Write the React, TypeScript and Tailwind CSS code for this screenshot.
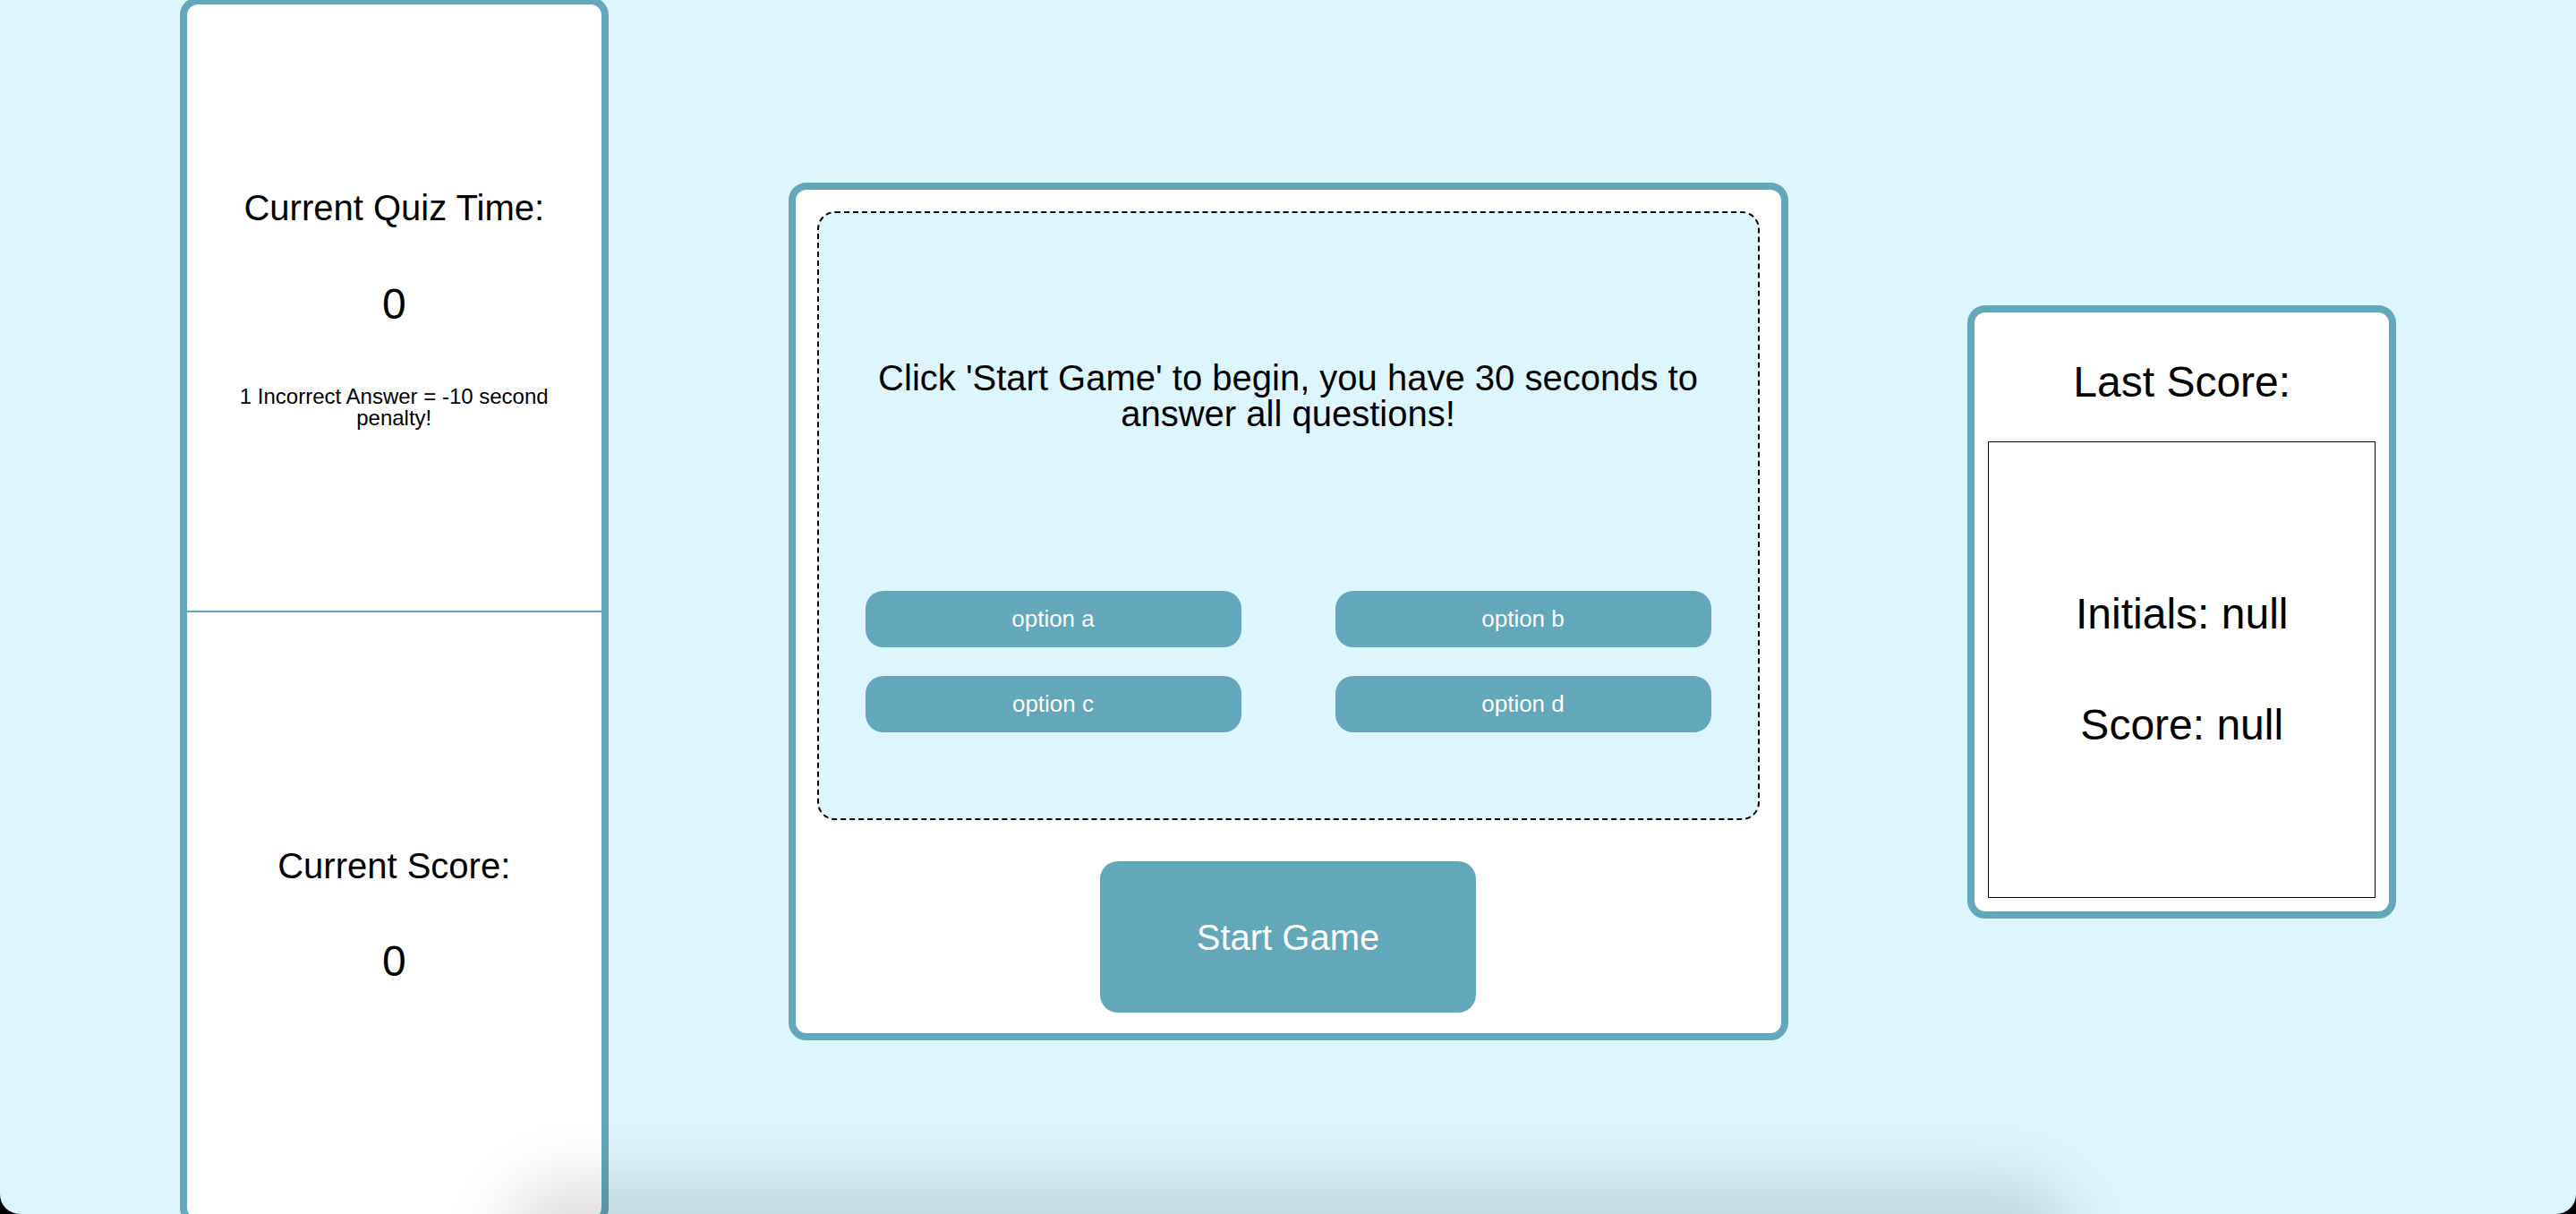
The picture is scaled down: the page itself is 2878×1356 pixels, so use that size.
import React from 'react';

const options = ['option a', 'option b', 'option c', 'option d'];

const App: React.FC = () => {
  return (
    <div className="w-full h-[1356px] bg-black font-['Liberation_Sans',Arial,sans-serif] text-black">
      <div className="relative h-full bg-[#ddf6fe] rounded-b-[22px] overflow-hidden">
        <div className="flex h-[1366px] items-center justify-evenly">
          {/* timer + score column */}
          <div className="flex flex-col w-[479px] h-[1372px] shrink-0 bg-white border-[8px] border-[#62a7ba] rounded-[20px]">
            <div className="flex-1 flex flex-col items-center justify-center text-center">
              <h2 className="text-[40px] leading-[46px]">Current Quiz Time:</h2>
              <p className="mt-[57px] text-[48px] leading-[55px]">0</p>
              <p className="mt-[64px] px-[34px] text-[24px] leading-[24px]">
                1 Incorrect Answer = -10 second penalty!
              </p>
            </div>
            <div className="h-[2px] bg-[#62a7ba]" />
            <div className="flex-1 flex flex-col items-center justify-center text-center">
              <h2 className="text-[40px] leading-[46px]">Current Score:</h2>
              <p className="mt-[56px] text-[48px] leading-[55px]">0</p>
            </div>
          </div>

          {/* quiz card */}
          <div className="flex flex-col w-[1117px] shrink-0 bg-white border-[8px] border-[#62a7ba] rounded-[20px] p-[24px] pb-[23px]">
            <div className="h-[680px] border-2 border-dashed border-black rounded-[20px] bg-[#ddf6fe] flex flex-col items-center pt-[164px]">
              <h2 className="px-[40px] text-center text-[40px] leading-[40px]">
                Click 'Start Game' to begin, you have 30 seconds to answer all questions!
              </h2>
              <div className="mt-[178px] grid grid-cols-2 gap-x-[105px] gap-y-[32px]">
                {options.map(opt => (
                  <button
                    key={opt}
                    className="w-[420px] h-[63px] rounded-[20px] bg-[#62a7ba] text-white text-[26px]"
                  >
                    {opt}
                  </button>
                ))}
              </div>
            </div>
            <button className="mt-[46px] self-center w-[420px] h-[169px] rounded-[20px] bg-[#62a7ba] text-white text-[40px]">
              Start Game
            </button>
          </div>

          {/* last score card */}
          <div className="flex flex-col w-[479px] shrink-0 bg-white border-[8px] border-[#62a7ba] rounded-[20px] px-[15px] pt-[50px] pb-[15px]">
            <h2 className="text-center text-[48px] leading-[55px]">Last Score:</h2>
            <div className="mt-[39px] h-[510px] border border-black flex flex-col items-center justify-center gap-[69px]">
              <p className="text-[48px] leading-[55px]">Initials: null</p>
              <p className="text-[48px] leading-[55px]">Score: null</p>
            </div>
          </div>
        </div>

        {/* soft shadow along the bottom edge */}
        <div className="pointer-events-none absolute bottom-[-70px] left-[600px] w-[1680px] h-[70px] rounded-full shadow-[0_0_70px_38px_rgba(0,0,0,0.13)]" />
      </div>
    </div>
  );
};

export default App;
